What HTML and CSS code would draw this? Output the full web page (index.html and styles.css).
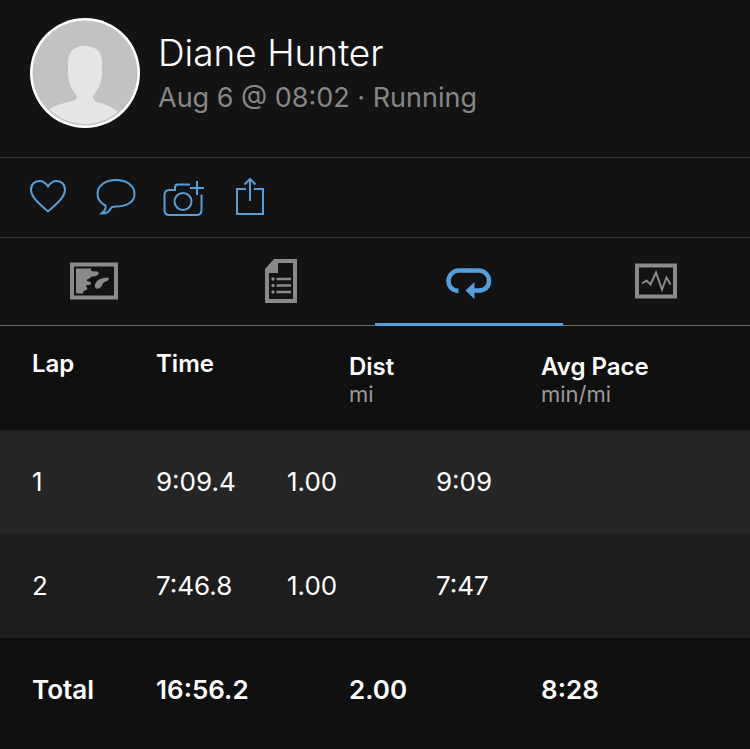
FILE: index.html
```html
<!DOCTYPE html>
<html lang="en">
<head>
    <meta charset="UTF-8">
    <meta name="viewport" content="width=device-width, initial-scale=1.0">
    <title>Activity - Laps</title>
    <link rel="stylesheet" href="styles.css">
</head>
<body>

    <header class="profile">
        <svg class="avatar" viewBox="0 0 110 110" aria-hidden="true">
            <defs>
                <clipPath id="avatar-clip"><circle cx="55" cy="55" r="51"/></clipPath>
            </defs>
            <circle cx="55" cy="55" r="55" fill="#fff"/>
            <circle cx="55" cy="55" r="52.500" fill="#c2c2c2"/>
            <path clip-path="url(#avatar-clip)" fill="#e6e6e6" d="M55 28c11 0 17 6 17 16v11c0 9-4 17-9 23 0 3 1 5 4 6 9 2 17 6 24 12-8 9-20 14-36 14S27 105 19 96v-5c7-4 15-6 24-8 3-1 4-2 4-5-5-6-9-14-9-23V44c0-10 6-16 17-16z"/>
        </svg>
        <div class="profile-text">
            <h1>Diane Hunter</h1>
            <p>Aug 6 @ 08:02 · Running</p>
        </div>
    </header>

    <div class="actions">
        <button type="button" aria-label="Like">
            <svg viewBox="0 0 40 40">
                <path d="M19 34.500C13 29 2 21 2 12.500 2 7 6 4 10.500 4c4 0 6.500 2.500 8.500 5.500C21 6.500 23.500 4 27.500 4 32 4 36 7 36 12.500 36 21 25 29 19 34.500z"/>
            </svg>
        </button>
        <button type="button" aria-label="Comment">
            <svg viewBox="0 0 40 40">
                <path d="M20 3C9.500 3 1.500 8.500 1.500 17c0 5 3 9 8 11.500 1 3-1.500 6-4 8 5 .2 8-2 9.500-5.500 1-1.500 3-1.500 5-1.500 11 0 18.500-4.500 18.500-12.500C38.500 8.500 30.500 3 20 3z"/>
            </svg>
        </button>
        <button type="button" aria-label="Add photo">
            <svg viewBox="0 0 40 40">
                <path d="M27 7.500H15q-3 0-3 3v2.500H6.500q-5 0-5 5v15q0 5 5 5h27q5 0 5-5V17.500"/>
                <circle cx="20" cy="24.500" r="8.500"/>
                <path d="M34 4v14M27 11h14"/>
            </svg>
        </button>
        <button type="button" aria-label="Share">
            <svg viewBox="0 0 40 40">
                <path d="M16 12H7v25h26V12h-9M20 24V2M14.500 7.500 20 2l5.500 5.500"/>
            </svg>
        </button>
    </div>

    <nav class="tabs">
        <a href="#map" aria-label="Map">
            <svg width="48" height="46" viewBox="0 0 48 46">
                <path fill="none" stroke="currentColor" stroke-width="4" d="M2 6.500h44v33H2z"/>
                <path d="M6 10.500h15c-.5 2 .5 3 3 3 3-.5 5.500.5 4.500 2.500s-4 2.500-6.500 2.500c-2 0-1 1.500-2.500 2s-3 .5-2.500 2 4 .5 4 2.500-2.500 2-4 2c-1.500.5-1 1.500 0 2.500 1 1.500-.5 2.500-2 3s-2 1.500-2 3H6z"/>
                <path d="M37.500 19.500c2 .5 1.500 3-.5 3.500-3 1-4.500 2-5 4.500-1 3-6 4.500-7 1.500-.5-3 1.500-6.500 5-8 2.500-1 5-1 7.500-1.500z"/>
            </svg>
        </a>
        <a href="#details" aria-label="Details">
            <svg width="34" height="46" viewBox="0 0 34 46">
                <path fill-rule="evenodd" d="M10 1h23v44H1V11zM14 5v10H5v26h24V5z"/>
                <circle cx="9" cy="21" r="1.700"/>
                <circle cx="9" cy="27.500" r="1.700"/>
                <circle cx="9" cy="34" r="1.700"/>
                <path d="M12.500 19.700H27v2.600H12.500zM12.500 26.200H27v2.600H12.500zM12.500 32.700H27v2.600H12.500z"/>
            </svg>
        </a>
        <a href="#laps" class="active" aria-current="page" aria-label="Laps">
            <svg width="46" height="46" viewBox="0 0 46 46">
                <path fill="none" stroke="currentColor" stroke-width="4.500" d="M12.500 33C6.500 32.500 2.500 28.500 2.500 23s4.500-10.500 10-10.500h20c6 0 10.500 4.500 10.500 10.500S38.500 32.500 33 32.500h-6"/>
                <path d="M19.500 32.500 28.500 24v17z"/>
            </svg>
        </a>
        <a href="#charts" aria-label="Charts">
            <svg width="44" height="46" viewBox="0 0 44 46">
                <path fill="none" stroke="currentColor" stroke-width="4" d="M3 7.500h38v31H3z"/>
                <path fill="none" stroke="currentColor" stroke-width="2" d="M8 25.500l4.500-3 4 4 5.500-12 6 17 4.500-12 4 7"/>
            </svg>
        </a>
    </nav>

    <table class="laps">
        <thead>
            <tr>
                <th scope="col">Lap</th>
                <th scope="col">Time</th>
                <th scope="col" class="with-unit">Dist <span>mi</span></th>
                <th scope="col" class="with-unit">Avg Pace <span>min/mi</span></th>
            </tr>
        </thead>
        <tbody>
            <tr>
                <td>1</td>
                <td>9:09.4</td>
                <td>1.00</td>
                <td>9:09</td>
            </tr>
            <tr>
                <td>2</td>
                <td>7:46.8</td>
                <td>1.00</td>
                <td>7:47</td>
            </tr>
        </tbody>
        <tfoot>
            <tr>
                <th scope="row">Total</th>
                <td>16:56.2</td>
                <td>2.00</td>
                <td>8:28</td>
            </tr>
        </tfoot>
    </table>

</body>
</html>
```
FILE: styles.css
```css
body {
    font-family: Inter, "Liberation Sans", sans-serif;
    background-color: #101010;
    color: #fff;
    margin: 0;
}

.profile {
    display: flex;
    align-items: center;
    gap: 18px;
    padding: 18px 30px 29px;
    background-color: #131313;
    border-bottom: 1px solid #333;
}

.avatar {
    width: 110px;
    height: 110px;
    flex-shrink: 0;
}

.profile h1 {
    margin: 0;
    font-size: 37px;
    font-weight: 300;
    line-height: 50px;
}

.profile p {
    margin: 0;
    color: #868686;
    font-size: 27px;
    line-height: 40px;
}

.actions {
    display: flex;
    gap: 27px;
    padding: 19px 29px 20px;
    background-color: #131313;
    border-bottom: 1px solid #333;
}

.actions button {
    padding: 0;
    border: none;
    background: none;
    color: #559fdb;
    cursor: pointer;
}

.actions svg {
    display: block;
    width: 40px;
    height: 40px;
    overflow: visible;
    fill: none;
    stroke: currentColor;
    stroke-width: 2;
}

.tabs {
    display: grid;
    grid-template-columns: repeat(4, 1fr);
    background-color: #131313;
    box-shadow: inset 0 -1px #6c6c6c;
}

.tabs a {
    display: flex;
    justify-content: center;
    padding: 20px 0 19px;
    border-bottom: 3px solid transparent;
    color: #8a8a8a;
}

.tabs a.active {
    color: #559fdb;
    border-color: #559fdb;
}

.tabs svg {
    fill: currentColor;
}

.laps,
.laps thead,
.laps tbody,
.laps tfoot {
    display: block;
}

/* lap rows use tighter columns than the header and the total */
.laps tr {
    display: grid;
    grid-template-columns: 124fr 193fr 192fr 177fr;
    align-items: center;
    box-sizing: border-box;
    min-height: 104px;
    padding: 0 32px;
}

.laps tbody tr {
    grid-template-columns: 124fr 131fr 149fr 282fr;
    background-color: #252525;
}

.laps tbody tr:nth-child(even) {
    background-color: #1d1d1d;
}

.laps th,
.laps td {
    padding: 0;
    text-align: left;
    font-size: 26px;
    line-height: 28px;
}

.laps thead tr {
    align-items: start;
    padding-top: 24px;
}

.laps thead th {
    font-size: 24px;
    font-weight: 600;
}

.laps thead .with-unit {
    padding-top: 3px;
}

.laps th span {
    display: block;
    color: #999;
    font-size: 22px;
    font-weight: 400;
    line-height: 26px;
}

.laps tfoot th,
.laps tfoot td {
    font-weight: 600;
}
```
